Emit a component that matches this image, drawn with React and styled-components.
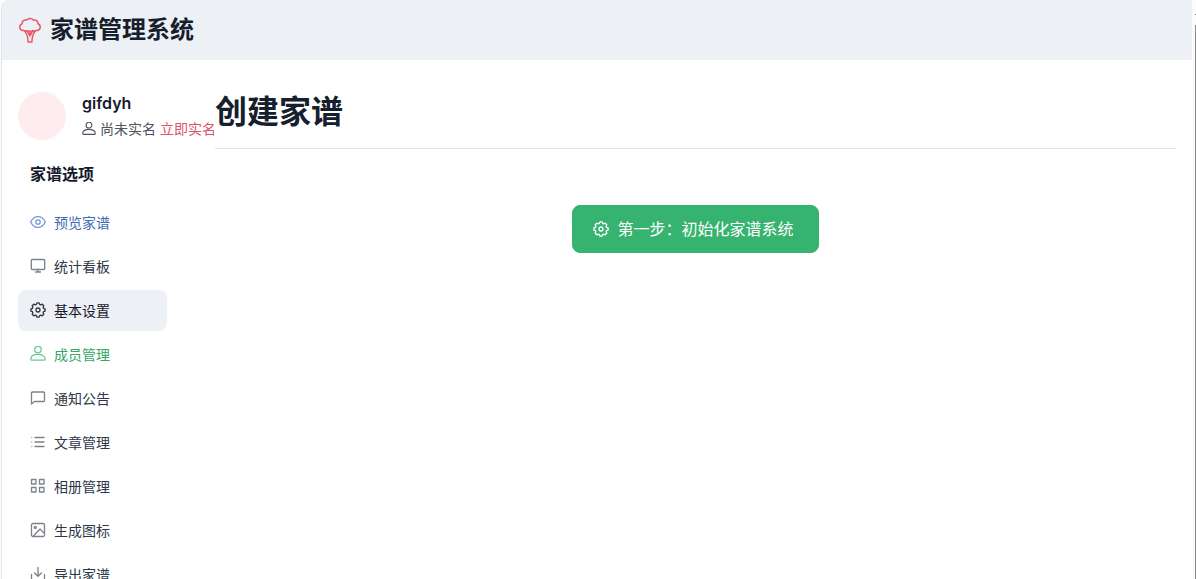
import React from "react";
import styled, { createGlobalStyle } from "styled-components";

const GlobalStyle = createGlobalStyle`
  * {
    box-sizing: border-box;
  }
  body {
    margin: 0;
    background: #fcfcfc;
    color: #16192c;
    font-family: Inter, "Noto Sans CJK SC", sans-serif;
    font-size: 14px;
    line-height: 20px;
  }
`;

const Screen = styled.div`
  display: flex;
  gap: 3px;
  height: 100vh;
  overflow: hidden;
  padding-left: 1px;
`;

const Card = styled.div`
  flex: 1;
  min-width: 0;
  background: #fff;
  border-left: 1px solid #e3e5e8;
  border-radius: 8px 0 0 0;
  overflow: hidden;
`;

const Edge = styled.div`
  width: 1px;
  margin-top: 14px;
  padding-top: 10px;
  background: #8a8a8a content-box;
  border-top: 1px solid #777;
`;

const Header = styled.header`
  display: flex;
  align-items: center;
  gap: 8px;
  height: 60px;
  padding: 0 16px;
  background: #edf0f5;
  color: #e85565;
`;

const Brand = styled.span`
  color: #16202c;
  font-size: 24px;
  font-weight: 700;
  line-height: 32px;
`;

const Body = styled.div`
  display: flex;
  padding: 32px 16px;
`;

const Sidebar = styled.aside`
  flex: none;
  width: 197px;
`;

const User = styled.div`
  display: flex;
  align-items: center;
  gap: 16px;
  height: 48px;
  white-space: nowrap;
`;

const Avatar = styled.div`
  flex: none;
  width: 48px;
  height: 48px;
  border-radius: 50%;
  background: #ffecee;
`;

const UserInfo = styled.div`
  padding-bottom: 2px;
`;

const UserName = styled.div`
  font-size: 16px;
  font-weight: 600;
  line-height: 24px;
`;

const UserState = styled.div`
  display: flex;
  align-items: center;
  gap: 4px;
  padding-top: 4px;
  color: #4d5560;
`;

const VerifyLink = styled.a`
  color: #dc5565;
  text-decoration: none;
`;

const NavTitle = styled.h2`
  margin: 0;
  padding: 22px 12px 16px;
  font-size: 16px;
  font-weight: 700;
  line-height: 24px;
`;

const Nav = styled.nav`
  display: flex;
  flex-direction: column;
  gap: 3px;
  width: 149px;
`;

const NavItem = styled.a`
  display: flex;
  align-items: center;
  gap: 8px;
  height: 41px;
  padding: 0 12px;
  border-radius: 8px;
  background: ${(props) => (props.$active ? "#edf0f5" : "transparent")};
  color: ${(props) => props.$color || "#2d3748"};
  text-decoration: none;

  svg {
    flex: none;
    margin-bottom: 2px;
    color: ${(props) => props.$iconColor || "#7c828a"};
  }
`;

const Main = styled.main`
  flex: 1;
  min-width: 0;
`;

const PageTitle = styled.h1`
  margin: 0;
  padding-bottom: 16px;
  border-bottom: 1px solid #e2e4e9;
  color: #16202c;
  font-size: 32px;
  font-weight: 700;
  line-height: 40px;
`;

const Actions = styled.div`
  display: flex;
  justify-content: center;
  padding-top: 56px;
`;

const StartButton = styled.button`
  display: flex;
  align-items: center;
  gap: 8px;
  height: 48px;
  padding: 0 24px 0 20px;
  border: 1px solid #36b36e;
  border-radius: 8px;
  background: #36b36e;
  color: #fff;
  font-family: inherit;
  font-size: 16px;
  line-height: 24px;
  cursor: pointer;
`;

const Icon = ({ size = 16, children }) => (
  <svg
    width={size}
    height={size}
    viewBox="0 0 16 16"
    fill="none"
    stroke="currentColor"
    strokeWidth="1.3"
    strokeLinecap="round"
    strokeLinejoin="round"
    aria-hidden="true"
  >
    {children}
  </svg>
);

const TreeIcon = () => (
  <svg width="24" height="26" viewBox="0 0 24 26" fill="none" stroke="currentColor" strokeWidth="1.5" strokeLinejoin="round" strokeLinecap="round" aria-hidden="true">
    <path d="M6 13.5C3 14 1.500 11.800 1.800 9.700C2 7.800 3 7 4 6.700C4.200 4 6.200 2.600 8.600 3C10.300 1 13.700 1 15.400 3C17.800 2.600 19.800 4 20 6.700C21.300 7.200 22.300 8 22.200 10C22.300 12 20.700 13.800 18 13.500C17.200 14.600 15.400 14.500 14.700 13.500C13.600 14.600 10.600 14.600 9.300 13.500C8.600 14.500 6.800 14.600 6 13.500Z" />
    <path d="M7 14.500C9.300 17 10 20 10.100 25H13.900C14 20 14.700 17 17 14.500M12 14.500V19M9.300 14L12 19L14.700 14" />
  </svg>
);

const PersonIcon = ({ size }) => (
  <Icon size={size}>
    <circle cx="8" cy="3.600" r="3.300" />
    <path d="M.8 13.200C.8 10.200 3.500 8.400 8 8.400S15.200 10.200 15.200 13.200Q15.200 14.200 14.300 14.200H1.700Q.8 14.200 .8 13.200Z" />
  </Icon>
);

const GearIcon = () => (
  <Icon>
    <path d="M6.300 2.500L6.900 .9H9.100L9.700 2.500L10.600 2.900L12.200 2.200L13.800 3.800L13.100 5.400L13.500 6.300L15.100 6.900V9.100L13.500 9.700L13.100 10.600L13.800 12.200L12.200 13.800L10.600 13.100L9.700 13.500L9.100 15.100H6.900L6.300 13.500L5.400 13.100L3.800 13.800L2.200 12.200L2.900 10.600L2.500 9.700L.9 9.100V6.900L2.500 6.300L2.900 5.400L2.200 3.800L3.800 2.200L5.400 2.900Z" />
    <circle cx="8" cy="8" r="2" />
  </Icon>
);

const EyeIcon = () => (
  <Icon>
    <path d="M.6 8C2.500 4.300 5 2.600 8 2.600S13.500 4.300 15.400 8C13.500 11.700 11 13.400 8 13.400S2.500 11.700 .6 8Z" />
    <circle cx="8" cy="8" r="2.200" />
  </Icon>
);

const MonitorIcon = () => (
  <Icon>
    <rect x="1.300" y="1.500" width="13.400" height="10" rx="1" />
    <path d="M8 11.500V14M5.500 14H10.500" />
  </Icon>
);

const MessageIcon = () => (
  <Icon>
    <path d="M1.500 14V3Q1.500 2 2.500 2H13.500Q14.500 2 14.500 3V10.500Q14.500 11.500 13.500 11.500H4.500Z" />
  </Icon>
);

const ListIcon = () => (
  <Icon>
    <path d="M5 3.500H14M5 8H14M5 12.500H14" />
    <path d="M1.500 3.500H2M1.500 8H2M1.500 12.500H2" opacity="0.5" />
  </Icon>
);

const GridIcon = () => (
  <Icon>
    <rect x="1.500" y="1.500" width="4.500" height="4.500" />
    <rect x="9.500" y="1.500" width="4.500" height="4.500" />
    <rect x="1.500" y="9.500" width="4.500" height="4.500" />
    <rect x="9.500" y="9.500" width="4.500" height="4.500" />
  </Icon>
);

const PictureIcon = () => (
  <Icon>
    <rect x="1.500" y="1.500" width="13" height="13" rx="1.500" />
    <circle cx="5.300" cy="5.500" r="1" />
    <path d="M3.500 14L10 7L14.500 11.500" />
  </Icon>
);

const DownloadIcon = () => (
  <Icon>
    <path d="M8 1.500V10M4.500 7L8 10.300L11.500 7M1.500 8.500V13.500Q1.500 14.500 2.500 14.500H13.500Q14.500 14.500 14.500 13.500V8.500" />
  </Icon>
);

const menu = [
  { label: "预览家谱", icon: <EyeIcon />, color: "#3f6bb5", iconColor: "#7098d8" },
  { label: "统计看板", icon: <MonitorIcon /> },
  { label: "基本设置", icon: <GearIcon />, color: "#16192c", iconColor: "#2d3340", active: true },
  { label: "成员管理", icon: <PersonIcon />, color: "#36a567", iconColor: "#72c796" },
  { label: "通知公告", icon: <MessageIcon /> },
  { label: "文章管理", icon: <ListIcon /> },
  { label: "相册管理", icon: <GridIcon /> },
  { label: "生成图标", icon: <PictureIcon /> },
  { label: "导出家谱", icon: <DownloadIcon /> },
];

const App = () => {
  return (
    <>
      <GlobalStyle />
      <Screen>
        <Card>
          <Header>
            <TreeIcon />
            <Brand>家谱管理系统</Brand>
          </Header>
          <Body>
            <Sidebar>
              <User>
                <Avatar />
                <UserInfo>
                  <UserName>gifdyh</UserName>
                  <UserState>
                    <PersonIcon size={14} />
                    <span>尚未实名</span>
                    <VerifyLink href="#verify">立即实名</VerifyLink>
                  </UserState>
                </UserInfo>
              </User>
              <NavTitle>家谱选项</NavTitle>
              <Nav>
                {menu.map(({ label, icon, color, iconColor, active }) => (
                  <NavItem key={label} href="#" $active={active} $color={color} $iconColor={iconColor}>
                    {icon}
                    {label}
                  </NavItem>
                ))}
              </Nav>
            </Sidebar>
            <Main>
              <PageTitle>创建家谱</PageTitle>
              <Actions>
                <StartButton type="button">
                  <GearIcon />
                  第一步：初始化家谱系统
                </StartButton>
              </Actions>
            </Main>
          </Body>
        </Card>
        <Edge />
      </Screen>
    </>
  );
};

export default App;
